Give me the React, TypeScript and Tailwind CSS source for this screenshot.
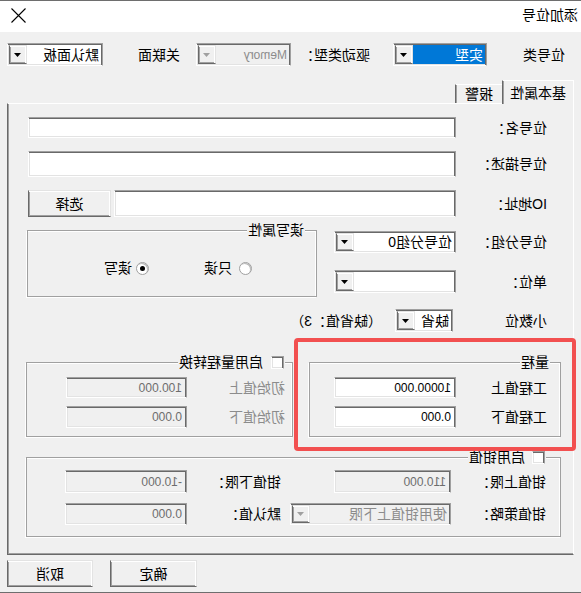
import clsx from 'clsx';
import type { ReactNode } from 'react';

// classic Win32 bevels
const sunken =
  'border border-[#a0a0a0] border-r-white border-b-white shadow-[inset_1px_1px_0_#696969,inset_-1px_-1px_0_#e3e3e3]';
const raised =
  'border border-[#e3e3e3] border-r-[#696969] border-b-[#696969] shadow-[inset_1px_1px_0_#fff,inset_-1px_-1px_0_#a0a0a0]';
const etched = 'border border-[#a0a0a0] shadow-[inset_1px_1px_0_#fff,1px_1px_0_#fff]';

function Label({ children, className, disabled }: { children: ReactNode; className?: string; disabled?: boolean }) {
  return (
    <span
      className={clsx(
        'shrink-0 whitespace-nowrap text-[14px] leading-[16px]',
        disabled ? 'text-[#8c8c8c]' : 'text-black',
        className,
      )}
    >
      {children}
    </span>
  );
}

function TextBox({ value, className, disabled }: { value?: string; className?: string; disabled?: boolean }) {
  return (
    <div
      className={clsx(
        sunken,
        'flex shrink-0 items-center pl-[4px] text-[12px] leading-none',
        disabled ? 'bg-[#f0f0f0] text-[#6d6d6d]' : 'bg-white text-black',
        className,
      )}
    >
      {value}
    </div>
  );
}

function DropArrow({ disabled }: { disabled?: boolean }) {
  return (
    <div className={clsx(raised, 'flex h-full w-[18px] shrink-0 items-center justify-center bg-[#f0f0f0]')}>
      <svg width="7" height="4" viewBox="0 0 7 4">
        <path d="M0 0h7L3.5 4z" fill={disabled ? '#a0a0a0' : '#000'} />
      </svg>
    </div>
  );
}

function Combo({
  value,
  className,
  disabled,
  selected,
  small,
}: {
  value?: string;
  className?: string;
  disabled?: boolean;
  selected?: boolean;
  small?: boolean;
}) {
  return (
    <div className={clsx(sunken, 'flex shrink-0 p-[1px]', disabled ? 'bg-[#f0f0f0]' : 'bg-white', className)}>
      <div
        className={clsx(
          'flex flex-1 items-center overflow-hidden whitespace-nowrap pl-[2px]',
          small ? 'text-[12px] leading-none' : 'text-[14px] leading-[16px]',
          selected && 'bg-[#0078d7] text-white',
          disabled && 'text-[#8c8c8c]',
          !selected && !disabled && 'text-black',
        )}
      >
        {value}
      </div>
      <DropArrow disabled={disabled} />
    </div>
  );
}

function Check() {
  return <div className={clsx(sunken, 'h-[13px] w-[13px] shrink-0 bg-white')} />;
}

function Radio({ checked }: { checked?: boolean }) {
  return (
    <div className="flex h-[13px] w-[13px] shrink-0 items-center justify-center rounded-full border border-[#a0a0a0] bg-white shadow-[inset_1px_1px_0_#b9b9b9]">
      {checked && <div className="h-[5px] w-[5px] rounded-full bg-black" />}
    </div>
  );
}

function Group({
  title,
  className,
  titleClass,
  children,
}: {
  title: ReactNode;
  className?: string;
  titleClass?: string;
  children?: ReactNode;
}) {
  return (
    <div className={clsx(etched, 'relative shrink-0', className)}>
      <div
        className={clsx(
          'absolute top-[-9px] flex items-center gap-[8px] bg-[#f0f0f0] px-[1px] text-[14px] leading-[16px] text-black',
          titleClass,
        )}
      >
        {title}
      </div>
      {children}
    </div>
  );
}

function Button({ children, className }: { children: ReactNode; className?: string }) {
  return (
    <div
      className={clsx(
        raised,
        'flex h-[27px] shrink-0 items-center justify-center bg-[#f0f0f0] text-[14px] leading-[16px] text-black',
        className,
      )}
    >
      {children}
    </div>
  );
}

export default function App() {
  return (
    <div className="relative h-[593px] w-[581px] -scale-x-100 overflow-hidden border-t border-b border-[#6e6e6e] bg-[#f0f0f0] font-['Liberation_Sans','Noto_Sans_CJK_SC',sans-serif] text-black">
      {/* title bar */}
      <div className="flex h-[31px] items-center justify-between bg-white pb-[3px] pl-[3px] pr-[11px]">
        <span className="text-[14px] leading-[16px]">添加位号</span>
        <svg width="15" height="15" viewBox="0 0 15 15">
          <path d="M0.5 0.5L14.5 14.5M14.5 0.5L0.5 14.5" stroke="#000" strokeWidth="1.1" />
        </svg>
      </div>

      {/* tag type / driver / panel */}
      <div className="mt-[11px] flex h-[23px] items-center pl-[16px]">
        <Label className="w-[78px]">位号类</Label>
        <Combo value="实型" selected className="h-[23px] w-[94px]" />
        <Label className="ml-[23px] w-[79px]">驱动类型：</Label>
        <Combo value="Memory" disabled small className="h-[23px] w-[95px]" />
        <Label className="ml-[16px] w-[77px]">关联面</Label>
        <Combo value="默认面板" className="h-[23px] w-[96px]" />
      </div>

      {/* tabs */}
      <div className="mt-[14px] flex h-[23px] items-start pl-[7px]">
        <div className="relative z-10 flex h-[24px] w-[72px] items-center justify-center border-t border-l border-white border-r border-r-[#696969] bg-[#f0f0f0] text-[14px] leading-[16px] shadow-[inset_-1px_0_0_#a0a0a0]">
          基本属性
        </div>
        <div className="mt-[4px] flex h-[19px] w-[47px] items-center justify-center border-t border-white border-r border-r-[#696969] text-[14px] leading-[16px] shadow-[inset_-1px_0_0_#a0a0a0]">
          报警
        </div>
      </div>

      {/* tab page */}
      <div className="mx-[7px] h-[452px] border border-white border-r-[#696969] border-b-[#696969] shadow-[inset_-1px_-1px_0_#a0a0a0]">
        <div className="mt-[13px] flex items-center pl-[26px]">
          <Label className="w-[91px]">位号名：</Label>
          <TextBox className="h-[21px] w-[428px]" />
        </div>
        <div className="mt-[13px] flex items-center pl-[26px]">
          <Label className="w-[91px]">位号描述：</Label>
          <TextBox className="h-[26px] w-[428px]" />
        </div>
        <div className="mt-[13px] flex items-center pl-[26px]">
          <Label className="w-[91px]">IO地址：</Label>
          <TextBox className="h-[27px] w-[342px]" />
          <Button className="ml-[3px] w-[83px]">选择</Button>
        </div>

        <div className="mt-[13px] flex items-start pl-[26px]">
          <div className="flex w-[213px] shrink-0 flex-col">
            <div className="mt-[1px] flex h-[22px] items-center">
              <Label className="w-[91px]">位号分组：</Label>
              <Combo value="位号分组0" className="h-[22px] w-[122px]" />
            </div>
            <div className="mt-[17px] flex h-[23px] items-center">
              <Label className="w-[91px]">单位：</Label>
              <Combo className="h-[23px] w-[122px]" />
            </div>
          </div>
          <Group title="读写属性" titleClass="left-[11px]" className="ml-[17px] h-[67px] w-[290px]">
            <div className="mt-[29px] flex items-center pl-[64px]">
              <Radio />
              <Label className="ml-[7px]">只读</Label>
              <div className="ml-[55px]">
                <Radio checked />
              </div>
              <Label className="ml-[4px]">读写</Label>
            </div>
          </Group>
        </div>

        <div className="mt-[12px] flex h-[23px] items-center pl-[26px]">
          <Label className="w-[94px]">小数位</Label>
          <Combo value="缺省" className="h-[23px] w-[58px]" />
          <Label className="ml-[13px]">（缺省值：3）</Label>
        </div>

        {/* range + range conversion */}
        <div className="mt-[30px] flex pl-[12px]">
          <Group title="量程" titleClass="left-[10px]" className="h-[75px] w-[252px]">
            <div className="flex items-center pl-[13px] pt-[14px]">
              <Label className="w-[91px]">工程值上</Label>
              <TextBox value="10000.000" className="h-[21px] w-[122px]" />
            </div>
            <div className="mt-[8px] flex items-center pl-[13px]">
              <Label className="w-[91px]">工程值下</Label>
              <TextBox value="0.000" className="h-[22px] w-[122px]" />
            </div>
          </Group>
          <Group
            title={
              <>
                <Check />
                <span>启用量程转换</span>
              </>
            }
            titleClass="left-[7px]"
            className="ml-[16px] h-[75px] w-[267px]"
          >
            <div className="flex items-center pl-[7px] pt-[14px]">
              <Label disabled className="w-[98px]">
                初始值上
              </Label>
              <TextBox disabled value="100.000" className="h-[21px] w-[121px]" />
            </div>
            <div className="mt-[8px] flex items-center pl-[7px]">
              <Label disabled className="w-[98px]">
                初始值下
              </Label>
              <TextBox disabled value="0.000" className="h-[22px] w-[121px]" />
            </div>
          </Group>
        </div>

        {/* clamp */}
        <Group
          title={
            <>
              <Check />
              <span className="-ml-[1px]">启用钳值</span>
            </>
          }
          titleClass="left-[14px]"
          className="ml-[12px] mt-[20px] h-[80px] w-[535px]"
        >
          <div className="flex items-center pl-[14px] pt-[12px]">
            <Label className="w-[95px]">钳值上限：</Label>
            <TextBox disabled value="110.000" className="h-[23px] w-[117px]" />
            <Label className="ml-[53px] w-[94px]">钳值下限：</Label>
            <TextBox disabled value="-10.000" className="h-[23px] w-[122px]" />
          </div>
          <div className="mt-[10px] flex items-center pl-[14px]">
            <Label className="w-[95px]">钳值策略：</Label>
            <Combo disabled value="使用钳值上下限" className="h-[22px] w-[161px]" />
            <Label className="ml-[9px] w-[94px]">默认值：</Label>
            <TextBox disabled value="0.000" className="h-[22px] w-[122px]" />
          </div>
        </Group>
      </div>

      <div className="mt-[5px] flex justify-end gap-[17px] pr-[7px]">
        <Button className="w-[87px]">确定</Button>
        <Button className="w-[86px]">取消</Button>
      </div>

      {/* highlight frame around the range group */}
      <div className="pointer-events-none absolute left-[5px] top-[337px] h-[113px] w-[282px] rounded-[4px] border-[4px] border-[#f25050]" />
    </div>
  );
}
